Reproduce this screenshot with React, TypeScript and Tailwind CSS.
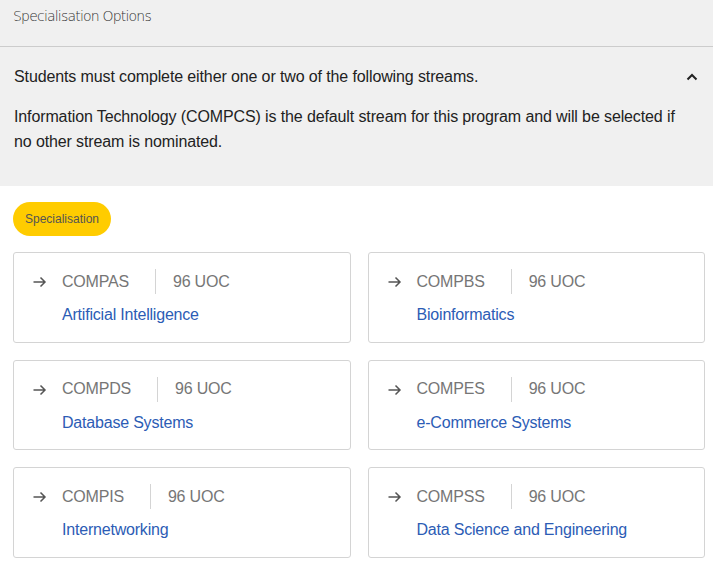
import React from "react";

const STREAMS = [
  { code: "COMPAS", uoc: "96 UOC", title: "Artificial Intelligence" },
  { code: "COMPBS", uoc: "96 UOC", title: "Bioinformatics" },
  { code: "COMPDS", uoc: "96 UOC", title: "Database Systems" },
  { code: "COMPES", uoc: "96 UOC", title: "e-Commerce Systems" },
  { code: "COMPIS", uoc: "96 UOC", title: "Internetworking" },
  { code: "COMPSS", uoc: "96 UOC", title: "Data Science and Engineering" },
];

const ArrowIcon = () => (
  <svg width="14" height="12" viewBox="0 0 14 12" fill="none" className="shrink-0">
    <path d="M0.5 6h11.5M7.5 1.5L12 6l-4.5 4.5" stroke="#555" strokeWidth="1.5" />
  </svg>
);

const StreamCard = ({ code, uoc, title }: any) => {
  return (
    <div className="h-[90.5px] rounded-[3px] border border-[#d4d4d4] bg-white pl-[19px] pt-[16px]">
      <div className="flex items-start">
        <div className="mt-[7px] w-[29px]">
          <ArrowIcon />
        </div>
        <div className="flex flex-col tracking-[-0.2px]">
          <div className="flex h-[25px] items-center">
            <span className="pr-[26px] text-[16px] text-[#767676]">{code}</span>
            <span className="h-[25px] w-px bg-[#d4d4d4]"></span>
            <span className="pl-[17px] text-[16px] text-[#767676]">{uoc}</span>
          </div>
          <span className="mt-[9px] text-[16px] text-[#2c5cb5]">{title}</span>
        </div>
      </div>
    </div>
  );
};

export default function App() {
  return (
    <div className="min-h-[571px] w-full bg-white font-['Liberation_Sans',Arial,sans-serif]">
      <div className="bg-[#f0f0f0]">
        <div className="flex h-[47px] items-start border-b border-[#cccccc] px-[13px] pt-[6px]">
          <span className="font-['DejaVu_Sans',sans-serif] text-[14px] font-extralight tracking-[-0.8px] text-[#333]">
            Specialisation Options
          </span>
        </div>
        <div className="px-[14px] pb-[32px] pt-[18px]">
          <div className="flex items-center justify-between">
            <p className="text-[16px] tracking-[-0.12px] text-[#222]">
              Students must complete either one or two of the following streams.
            </p>
            <svg width="12" height="8" viewBox="0 0 12 8" fill="none" className="mr-[1px]">
              <path d="M1.5 6.5L6 2l4.5 4.5" stroke="#222" strokeWidth="2" />
            </svg>
          </div>
          <p className="mt-[15px] pr-[24px] text-[16px] leading-[25px] tracking-[-0.12px] text-[#222]">
            Information Technology (COMPCS) is the default stream for this program and will be selected if
            no other stream is nominated.
          </p>
        </div>
      </div>
      <div className="pl-[13px] pr-[8px] pt-[16px]">
        <span className="inline-flex h-[34px] items-center rounded-full bg-[#ffcc00] px-[12px] text-[12px] text-[#555]">
          Specialisation
        </span>
        <div className="mt-[16px] grid grid-cols-2 gap-x-[17px] gap-y-[17px]">
          {STREAMS.map((s) => (
            <StreamCard key={s.code} {...s} />
          ))}
        </div>
      </div>
    </div>
  );
}
